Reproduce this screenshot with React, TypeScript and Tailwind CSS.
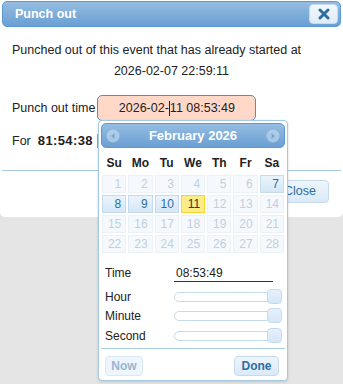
const font = { fontFamily: '"Liberation Sans", Arial, sans-serif' };

const dayNames = ["Su", "Mo", "Tu", "We", "Th", "Fr", "Sa"];
const weeks = [
  [1, 2, 3, 4, 5, 6, 7],
  [8, 9, 10, 11, 12, 13, 14],
  [15, 16, 17, 18, 19, 20, 21],
  [22, 23, 24, 25, 26, 27, 28],
];

function DayCell({ day }: { day: number }) {
  if (day === 11) {
    return (
      <div className="h-[18px] flex items-center justify-end pr-[4px] border border-[#fad42e] bg-[#fbec88] text-[#363636] text-[12px]">
        {day}
      </div>
    );
  }
  if (day >= 7 && day <= 10) {
    return (
      <div className="h-[18px] flex items-center justify-end pr-[4px] border border-[#c5dbec] bg-gradient-to-b from-[#eaf3fc] to-[#d5e7f7] text-[#2e6e9e] text-[12px]">
        {day}
      </div>
    );
  }
  return (
    <div className="h-[18px] flex items-center justify-end pr-[4px] border border-[#eaf1f7] bg-[#f5f9fd] text-[#bfd0de] text-[12px]">
      {day}
    </div>
  );
}

function Slider() {
  return (
    <div className="relative w-[108px] h-[16px] flex items-center">
      <div className="w-[100px] h-[10px] rounded-full border border-[#c5dbec] bg-white" />
      <div className="absolute right-0 top-0 w-[15px] h-[15px] rounded-[4px] border border-[#c5dbec] bg-gradient-to-b from-[#e6f1fb] to-[#d6e7f7]" />
    </div>
  );
}

function CircleArrow({ dir }: { dir: "left" | "right" }) {
  return (
    <svg width="14" height="14" viewBox="0 0 14 14" className="opacity-50">
      <circle cx="7" cy="7" r="6.5" fill="#d8e7f5" />
      {dir === "left" ? (
        <path d="M8.5 4 L5 7 L8.5 10 Z" fill="#6f9fcc" />
      ) : (
        <path d="M5.5 4 L9 7 L5.5 10 Z" fill="#6f9fcc" />
      )}
    </svg>
  );
}

export default function App() {
  return (
    <div className="relative w-[343px] h-[384px] bg-[#e5e5e5] overflow-hidden text-[#222]" style={font}>
      <div className="w-[343px] h-[217px] bg-white rounded-b-[5px] px-[2px] pt-[1px] flex flex-col">
        <div className="h-[26px] flex items-center justify-between pl-[12px] pr-[2px] rounded-[5px] border border-[#5b9bd5] bg-gradient-to-b from-[#95bde1] to-[#6a9fd2]">
          <span className="text-white font-bold text-[12.5px]">Punch out</span>
          <button className="w-[29px] h-[20px] flex items-center justify-center rounded-[4px] border border-[#c5dbec] bg-gradient-to-b from-[#f2f8fd] to-[#dfecf8]">
            <svg width="12" height="12" viewBox="0 0 12 12">
              <path d="M2 2 L10 10 M10 2 L2 10" stroke="#2e6e9e" strokeWidth="3" strokeLinecap="round" />
            </svg>
          </button>
        </div>

        <div className="px-[10px] pt-[13px] text-[12.5px]">
          <div className="leading-[21px]">Punched out of this event that has already started at</div>
          <div className="leading-[21px] text-center">2026-02-07 22:59:11</div>

          <div className="mt-[13px] flex items-center">
            <span>Punch out time</span>
            <div className="ml-[2px] w-[159px] h-[26px] rounded-[5px] border-[1.5px] border-[#4a8fd8] bg-[#ffd8c8] flex items-center justify-center">
              <span>2026-02-</span>
              <span className="w-[1px] h-[15px] bg-[#222]" />
              <span>11 08:53:49</span>
            </div>
          </div>

          <div className="mt-[10px] h-[20px] flex items-center">
            <span>For</span>
            <span className="ml-[7px] font-bold text-[13px] tracking-[0.4px]">81:54:38</span>
            <span className="ml-[4px] w-[2px] h-[14px] bg-[#d09a72]" />
          </div>
        </div>

        <div className="mt-[19px] border-t border-[#a6c9e2] flex justify-end pr-[12px] pt-[9px]">
          <button className="h-[23px] px-[12px] rounded-[4px] border border-[#c5dbec] bg-gradient-to-b from-[#eef5fc] to-[#dbeaf8] text-[#2e6e9e] text-[12.5px]">
            Close
          </button>
        </div>
      </div>

      <div className="absolute left-[98px] top-[120px] w-[190px] h-[261px] bg-white border border-[#a6c9e2] rounded-[4px] shadow-[0_1px_3px_rgba(0,0,0,0.15)] px-[2px] pt-[2px]">
        <div className="h-[25px] rounded-[5px] border border-[#5b9bd5] bg-gradient-to-b from-[#95bde1] to-[#6a9fd2] flex items-center justify-between px-[4px]">
          <CircleArrow dir="left" />
          <span className="text-white font-bold text-[13px]">February 2026</span>
          <CircleArrow dir="right" />
        </div>

        <div className="mx-[1px] mt-[5px] grid grid-cols-7 gap-x-[2px] h-[20px] items-center">
          {dayNames.map((d) => (
            <div key={d} className="text-center font-bold text-[12px] text-[#222]">
              {d}
            </div>
          ))}
        </div>

        <div className="mx-[1px] mt-[2px] grid grid-cols-7 gap-[2px]">
          {weeks.flat().map((d) => (
            <DayCell key={d} day={d} />
          ))}
        </div>

        <div className="mt-[10px] pl-[4px] text-[12px]">
          <div className="h-[20px] flex items-center">
            <span className="w-[69px]">Time</span>
            <span className="w-[99px] pl-[2px] border-b border-[#333] leading-[15px] mt-[2px]">08:53:49</span>
          </div>
          <div className="mt-[4px]">
            {["Hour", "Minute", "Second"].map((l) => (
              <div key={l} className="h-[19.5px] flex items-center">
                <span className="w-[69px]">{l}</span>
                <Slider />
              </div>
            ))}
          </div>
        </div>

        <div className="mt-[2px] border-t border-[#a6c9e2] flex justify-between pl-[4px] pr-[6px] pt-[7px]">
          <button className="h-[20px] w-[38px] rounded-[4px] border border-[#dbe8f4] bg-[#eef5fc] text-[#97b6d0] text-[12px] font-bold">
            Now
          </button>
          <button className="h-[20px] w-[45px] rounded-[4px] border border-[#c5dbec] bg-gradient-to-b from-[#eef5fc] to-[#dbeaf8] text-[#2e6e9e] text-[12px] font-bold">
            Done
          </button>
        </div>
      </div>
    </div>
  );
}
